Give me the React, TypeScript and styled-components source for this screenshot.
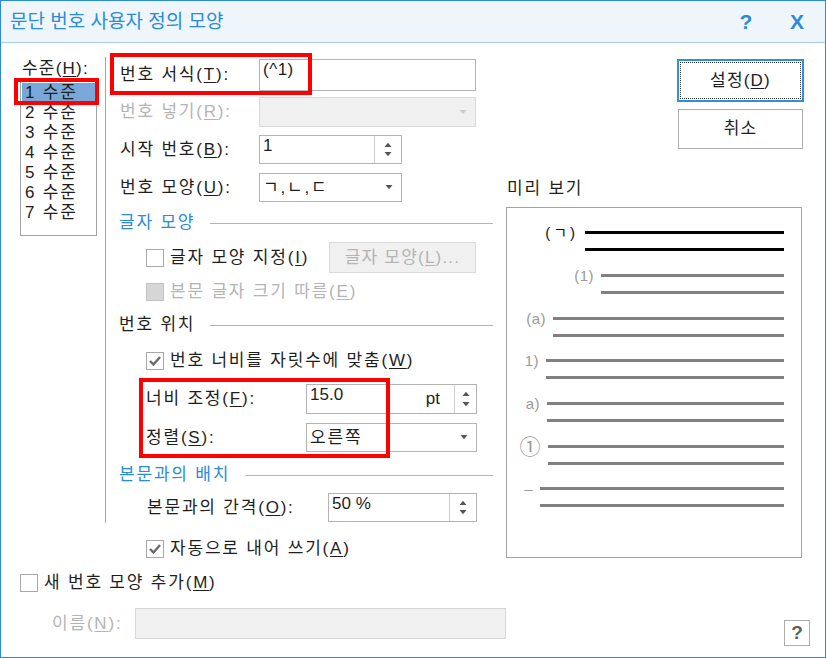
import React from 'react';
import styled, { createGlobalStyle } from 'styled-components';

const BLUE = '#2b8bd6';
const TEXT = '#1e1e1e';
const DIS = '#b4b4b4';

const GlobalStyle = createGlobalStyle`
  html, body { margin: 0; padding: 0; background: #fff; }
  body { font-family: "Liberation Sans", "Noto Sans CJK KR", sans-serif; color: ${TEXT}; }
  * { box-sizing: border-box; }
  u { text-underline-offset: 2px; text-decoration-thickness: 1px; }
`;

const Window = styled.div`
  position: relative;
  width: 826px;
  height: 658px;
  border: 1px solid ${BLUE};
  background: #fff;
  display: flex;
  flex-direction: column;
  font-size: 17px;
  line-height: 20px;
  letter-spacing: 1.8px;
  overflow: hidden;
`;

const TitleBar = styled.div`
  flex: none;
  height: 42px;
  background: #eef6fb;
  border-bottom: 1px solid #a9cdea;
  display: flex;
  align-items: center;
  padding: 1px 13px 0 9px;
`;

const TitleText = styled.div`
  font-size: 19px;
  color: ${BLUE};
  letter-spacing: 0;
  white-space: nowrap;
`;

const TitleBtn = styled.div<{ $first?: boolean }>`
  width: 30px;
  text-align: center;
  font-family: "Liberation Sans", Arial, sans-serif;
  font-weight: bold;
  font-size: 21px;
  letter-spacing: 0;
  color: ${BLUE};
  margin-left: ${(p) => (p.$first ? 'auto' : '21px')};
`;

const Main = styled.div`
  display: flex;
  align-items: flex-start;
`;

const LeftCol = styled.div`
  margin-left: 19px;
  width: 77px;
  padding-top: 16px;
  display: flex;
  flex-direction: column;
`;

const LevelLabel = styled.div`
  height: 20px;
  padding-left: 2px;
  white-space: nowrap;
  letter-spacing: 1.2px;
`;

const ListBox = styled.div`
  margin-top: 2px;
  height: 155px;
  border: 1px solid #a3a3a3;
  padding: 1px;
`;

const ListItem = styled.div<{ $selected?: boolean }>`
  height: 20px;
  line-height: 20px;
  padding-left: 3px;
  white-space: nowrap;
  background: ${(p) => (p.$selected ? '#7aa7d9' : 'transparent')};
`;

const VSep = styled.div`
  flex: none;
  width: 1px;
  height: 466px;
  margin: 14px 0 0 8px;
  background: #a8a8a8;
`;

const MiddleCol = styled.div`
  flex: none;
  margin-left: 4px;
  width: 383px;
  padding-top: 16px;
  display: flex;
  flex-direction: column;
`;

const FieldRow = styled.div<{ $mt: number; $h: number; $indent: number }>`
  display: flex;
  align-items: center;
  height: ${(p) => p.$h}px;
  margin-top: ${(p) => p.$mt}px;
  padding-left: ${(p) => p.$indent}px;
`;

const Label = styled.div<{ $w: number; $disabled?: boolean }>`
  flex: none;
  width: ${(p) => p.$w}px;
  white-space: nowrap;
  color: ${(p) => (p.$disabled ? DIS : TEXT)};
`;

const TextBox = styled.div<{ $w: number }>`
  flex: none;
  width: ${(p) => p.$w}px;
  height: 100%;
  border: 1px solid #b3b3b3;
  padding: 0 0 0 3px;
  line-height: 20px;
  letter-spacing: 0.5px;
  background: #fff;
`;

const SelectBox = styled.div<{ $w: number; $disabled?: boolean }>`
  flex: none;
  width: ${(p) => p.$w}px;
  height: 100%;
  border: 1px solid ${(p) => (p.$disabled ? '#d9d9d9' : '#b3b3b3')};
  background: ${(p) => (p.$disabled ? '#f0f0f0' : '#fff')};
  display: flex;
  align-items: center;
  padding: 0 8px 0 3px;
`;

const SelectText = styled.div`
  flex: 1;
  white-space: nowrap;
`;

const Spin = styled.div<{ $w: number }>`
  flex: none;
  width: ${(p) => p.$w}px;
  height: 100%;
  border: 1px solid #b3b3b3;
  display: flex;
  background: #fff;
`;

const SpinText = styled.div`
  flex: 1;
  padding-left: 3px;
  line-height: 20px;
  letter-spacing: 0;
  display: flex;
  justify-content: space-between;
`;

const Unit = styled.span`
  align-self: center;
  padding-right: 14px;
`;

const SpinButtons = styled.div<{ $w: number }>`
  flex: none;
  width: ${(p) => p.$w}px;
  border-left: 1px solid #cfcfcf;
  display: flex;
  flex-direction: column;
  align-items: center;
  justify-content: space-around;
  padding: 3px 0;
`;

const Heading = styled.div<{ $mt: number; $color: string }>`
  display: flex;
  align-items: center;
  height: 20px;
  margin-top: ${(p) => p.$mt}px;
  padding-left: 9px;
  color: ${(p) => p.$color};
  white-space: nowrap;
`;

const HLine = styled.div`
  flex: 1;
  height: 1px;
  margin-left: 15px;
  background: #b4b4b4;
`;

const CheckLabel = styled.div<{ $w?: number; $disabled?: boolean }>`
  flex: none;
  ${(p) => (p.$w ? `width: ${p.$w}px;` : '')}
  display: flex;
  align-items: center;
  gap: 6px;
  white-space: nowrap;
  color: ${(p) => (p.$disabled ? DIS : TEXT)};
`;

const Box = styled.div<{ $disabled?: boolean }>`
  flex: none;
  width: 18px;
  height: 18px;
  border: 1px solid ${(p) => (p.$disabled ? '#c4c4c4' : '#a8a8a8')};
  background: ${(p) => (p.$disabled ? '#d6d6d6' : '#fff')};
  display: flex;
  align-items: center;
  justify-content: center;
`;

const DisabledButton = styled.div<{ $w: number }>`
  flex: none;
  width: ${(p) => p.$w}px;
  height: 100%;
  background: #f0f0f0;
  border: 1px solid #d9d9d9;
  color: ${DIS};
  display: flex;
  align-items: center;
  justify-content: center;
  white-space: nowrap;
  letter-spacing: 1.2px;
`;

const RightCol = styled.div`
  flex: none;
  margin-left: 13px;
  width: 298px;
  padding-top: 16px;
  display: flex;
  flex-direction: column;
`;

const DialogButton = styled.div<{ $primary?: boolean }>`
  position: relative;
  align-self: flex-end;
  width: ${(p) => (p.$primary ? 127 : 125)}px;
  height: ${(p) => (p.$primary ? 43 : 40)}px;
  margin-top: ${(p) => (p.$primary ? 0 : 7)}px;
  margin-right: ${(p) => (p.$primary ? 0 : 1)}px;
  border: ${(p) => (p.$primary ? `2px solid #3090db` : '1px solid #adadad')};
  background: #fff;
  display: flex;
  align-items: center;
  justify-content: center;
  letter-spacing: 1.2px;
  ${(p) =>
    p.$primary
      ? `&::after { content: ''; position: absolute; inset: 1px; border: 1px dotted #333; }`
      : ''}
`;

const PreviewLabel = styled.div`
  margin-top: 30px;
  height: 20px;
  padding-left: 1px;
`;

const PreviewBox = styled.div`
  margin-top: 8px;
  width: 296px;
  height: 351px;
  border: 1px solid #a3a3a3;
  padding: 0 17px 0 0;
  display: flex;
  flex-direction: column;
`;

const PreviewItem = styled.div<{ $mt: number; $numW: number }>`
  display: grid;
  grid-template-columns: ${(p) => p.$numW}px 1fr;
  grid-template-rows: 17px 17px;
  margin-top: ${(p) => p.$mt}px;
`;

const PreviewNum = styled.div<{ $dark?: boolean; $big?: boolean }>`
  grid-row: 1;
  text-align: right;
  padding-right: 7px;
  font-size: ${(p) => (p.$big ? 21 : 15)}px;
  line-height: 17px;
  letter-spacing: ${(p) => (p.$dark ? 3 : 0.5)}px;
  white-space: nowrap;
  color: ${(p) => (p.$dark ? '#111' : '#9a9a9a')};
`;

const PreviewLine = styled.div<{ $dark?: boolean; $row: number }>`
  grid-column: 2;
  grid-row: ${(p) => p.$row};
  align-self: center;
  height: 3px;
  background: ${(p) => (p.$dark ? '#000' : '#808080')};
`;

const BottomCheckRow = styled.div`
  margin: 16px 0 0 19px;
  height: 18px;
  display: flex;
  align-items: center;
`;

const NameRow = styled.div`
  margin-top: 16px;
  display: flex;
  align-items: flex-start;
  padding-left: 51px;
`;

const NameLabel = styled.div`
  width: 83px;
  height: 31px;
  display: flex;
  align-items: center;
  color: ${DIS};
  white-space: nowrap;
`;

const NameInput = styled.div`
  width: 371px;
  height: 31px;
  background: #f0f0f0;
  border: 1px solid #d6d6d6;
`;

const HelpButton = styled.div`
  margin: 12px 15px 0 auto;
  width: 26px;
  height: 26px;
  border: 1px solid #adadad;
  display: flex;
  align-items: center;
  justify-content: center;
  font-family: "Liberation Sans", Arial, sans-serif;
  font-weight: bold;
  font-size: 19px;
  letter-spacing: 0;
  color: #5e5e5e;
`;

const RedBox = styled.div<{ $l: number; $t: number; $w: number; $h: number }>`
  position: absolute;
  left: ${(p) => p.$l}px;
  top: ${(p) => p.$t}px;
  width: ${(p) => p.$w}px;
  height: ${(p) => p.$h}px;
  border: 4px solid #ff0000;
  pointer-events: none;
`;

const TriUp = ({ c = '#555' }: { c?: string }) => (
  <svg width="8" height="5" viewBox="0 0 8 5">
    <path d="M0.5 5 L4 0.8 L7.5 5 Z" fill={c} />
  </svg>
);
const TriDown = ({ c = '#555' }: { c?: string }) => (
  <svg width="8" height="5" viewBox="0 0 8 5">
    <path d="M0.5 0 L7.5 0 L4 4.2 Z" fill={c} />
  </svg>
);
const Check = () => (
  <svg width="14" height="14" viewBox="0 0 14 14">
    <path d="M2 7 L5.5 10.5 L12 3" fill="none" stroke="#6b6b6b" strokeWidth="2.4" />
  </svg>
);

const CheckBox = ({ checked, disabled }: { checked?: boolean; disabled?: boolean }) => (
  <Box $disabled={disabled}>{checked ? <Check /> : null}</Box>
);

const SpinArrows = ({ w }: { w: number }) => (
  <SpinButtons $w={w}>
    <TriUp />
    <TriDown />
  </SpinButtons>
);

const preview = [
  { num: '(ㄱ)', start: 585, mt: 16, dark: true },
  { num: '(1)', start: 601, mt: 9 },
  { num: '(a)', start: 553, mt: 9 },
  { num: '1)', start: 546, mt: 8 },
  { num: 'a)', start: 547, mt: 9 },
  { num: '①', start: 548, mt: 9, big: true },
  { num: '–', start: 540, mt: 8 },
];

export default function App() {
  return (
    <>
      <GlobalStyle />
      <Window>
        <TitleBar>
          <TitleText>문단 번호 사용자 정의 모양</TitleText>
          <TitleBtn $first>?</TitleBtn>
          <TitleBtn>X</TitleBtn>
        </TitleBar>

        <Main>
          <LeftCol>
            <LevelLabel>
              수준(<u>H</u>):
            </LevelLabel>
            <ListBox>
              {[1, 2, 3, 4, 5, 6, 7].map((n) => (
                <ListItem key={n} $selected={n === 1}>
                  {n} 수준
                </ListItem>
              ))}
            </ListBox>
          </LeftCol>

          <VSep />

          <MiddleCol>
            <FieldRow $mt={0} $h={32} $indent={10}>
              <Label $w={139}>
                번호 서식(<u>T</u>):
              </Label>
              <TextBox $w={217}>(^1)</TextBox>
            </FieldRow>
            <FieldRow $mt={6} $h={30} $indent={10}>
              <Label $w={139} $disabled>
                번호 넣기(<u>R</u>):
              </Label>
              <SelectBox $w={217} $disabled>
                <SelectText />
                <TriDown c="#cdcdcd" />
              </SelectBox>
            </FieldRow>
            <FieldRow $mt={8} $h={29} $indent={10}>
              <Label $w={139}>
                시작 번호(<u>B</u>):
              </Label>
              <Spin $w={143}>
                <SpinText>1</SpinText>
                <SpinArrows w={27} />
              </Spin>
            </FieldRow>
            <FieldRow $mt={9} $h={29} $indent={10}>
              <Label $w={139}>
                번호 모양(<u>U</u>):
              </Label>
              <SelectBox $w={143}>
                <SelectText>ㄱ,ㄴ,ㄷ</SelectText>
                <TriDown />
              </SelectBox>
            </FieldRow>

            <Heading $mt={11} $color={BLUE}>
              <span>글자 모양</span>
              <HLine />
            </Heading>
            <FieldRow $mt={9} $h={31} $indent={36}>
              <CheckLabel $w={183}>
                <CheckBox />
                <span>
                  글자 모양 지정(<u>I</u>)
                </span>
              </CheckLabel>
              <DisabledButton $w={147}>
                <span>
                  글자 모양(<u>L</u>)...
                </span>
              </DisabledButton>
            </FieldRow>
            <FieldRow $mt={9} $h={20} $indent={36}>
              <CheckLabel $disabled>
                <CheckBox disabled />
                <span>
                  본문 글자 크기 따름(<u>E</u>)
                </span>
              </CheckLabel>
            </FieldRow>

            <Heading $mt={13} $color={TEXT}>
              <span>번호 위치</span>
              <HLine />
            </Heading>
            <FieldRow $mt={16} $h={20} $indent={36}>
              <CheckLabel>
                <CheckBox checked />
                <span>
                  번호 너비를 자릿수에 맞춤(<u>W</u>)
                </span>
              </CheckLabel>
            </FieldRow>
            <FieldRow $mt={13} $h={30} $indent={36}>
              <Label $w={160}>
                너비 조정(<u>F</u>):
              </Label>
              <Spin $w={171}>
                <SpinText>
                  <span>15.0</span>
                  <Unit>pt</Unit>
                </SpinText>
                <SpinArrows w={22} />
              </Spin>
            </FieldRow>
            <FieldRow $mt={9} $h={29} $indent={36}>
              <Label $w={160}>
                정렬(<u>S</u>):
              </Label>
              <SelectBox $w={171}>
                <SelectText>오른쪽</SelectText>
                <TriDown />
              </SelectBox>
            </FieldRow>

            <Heading $mt={13} $color={BLUE}>
              <span>본문과의 배치</span>
              <HLine />
            </Heading>
            <FieldRow $mt={8} $h={29} $indent={37}>
              <Label $w={181}>
                본문과의 간격(<u>O</u>):
              </Label>
              <Spin $w={149}>
                <SpinText>50 %</SpinText>
                <SpinArrows w={27} />
              </Spin>
            </FieldRow>
            <FieldRow $mt={17} $h={19} $indent={36}>
              <CheckLabel>
                <CheckBox checked />
                <span>
                  자동으로 내어 쓰기(<u>A</u>)
                </span>
              </CheckLabel>
            </FieldRow>
          </MiddleCol>

          <RightCol>
            <DialogButton $primary>
              <span>
                설정(<u>D</u>)
              </span>
            </DialogButton>
            <DialogButton>취소</DialogButton>
            <PreviewLabel>미리 보기</PreviewLabel>
            <PreviewBox>
              {preview.map((p) => (
                <PreviewItem key={p.num} $mt={p.mt} $numW={p.start - 507}>
                  <PreviewNum $dark={p.dark} $big={p.big}>
                    {p.num}
                  </PreviewNum>
                  <PreviewLine $row={1} $dark={p.dark} />
                  <PreviewLine $row={2} $dark={p.dark} />
                </PreviewItem>
              ))}
            </PreviewBox>
          </RightCol>
        </Main>

        <BottomCheckRow>
          <CheckLabel>
            <CheckBox />
            <span>
              새 번호 모양 추가(<u>M</u>)
            </span>
          </CheckLabel>
        </BottomCheckRow>
        <NameRow>
          <NameLabel>
            <span>
              이름(<u>N</u>):
            </span>
          </NameLabel>
          <NameInput />
          <HelpButton>?</HelpButton>
        </NameRow>

        <RedBox $l={13} $t={77} $w={85} $h={27} />
        <RedBox $l={109} $t={52} $w={202} $h={42} />
        <RedBox $l={138} $t={377} $w={251} $h={80} />
      </Window>
    </>
  );
}
